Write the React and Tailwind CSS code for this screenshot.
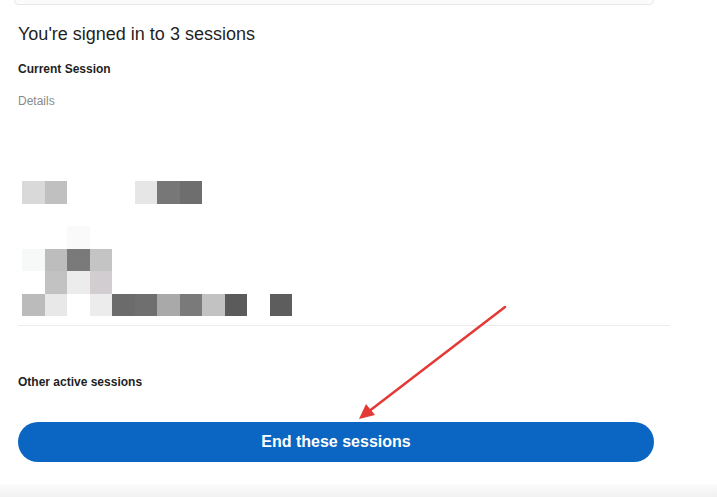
const cells = [
    ['bg-[#d9d9d9]', 'bg-[#c0c0c0]', '', '', '', 'bg-[#e6e6e6]', 'bg-[#777777]', 'bg-[#6e6e6e]', '', '', '', ''],
    ['', '', '', '', '', '', '', '', '', '', '', ''],
    ['', '', 'bg-[#fafafa]', '', '', '', '', '', '', '', '', ''],
    ['bg-[#f7f9f8]', 'bg-[#bdbdbd]', 'bg-[#7a7a7a]', 'bg-[#c4c4c4]', '', '', '', '', '', '', '', ''],
    ['', 'bg-[#c2c2c2]', 'bg-[#ececec]', 'bg-[#d1cdd1]', '', '', '', '', '', '', '', ''],
    ['bg-[#bbbbbb]', 'bg-[#e8e8e8]', '', 'bg-[#ececec]', 'bg-[#6b6b6b]', 'bg-[#6f6f6f]', 'bg-[#a9a9a9]', 'bg-[#7a7a7a]', 'bg-[#c2c2c2]', 'bg-[#5b5b5b]', '', 'bg-[#5d5d5d]'],
]

export default function App() {
    return (
        <div className="relative w-[717px] h-[497px] bg-white overflow-hidden font-['Liberation_Sans',sans-serif] text-[#1f1f1f]">
            <div className="ml-[14px] w-[640px] h-[5px] rounded-b-lg border-x border-b border-[#e6e6e6] bg-[#fbfbfb]" />

            <div className="pl-[18px]">
                <h2 className="mt-[17px] text-[18px] leading-6">You're signed in to 3 sessions</h2>
                <div className="mt-[15px] text-[12px] leading-4 font-bold">Current Session</div>
                <div className="mt-[16px] text-[12px] leading-4 text-[#8a8a8a]">Details</div>

                <div className="mt-[72px] ml-[4px] grid grid-cols-[repeat(12,22.5px)] auto-rows-[22.5px]">
                    {cells.flat().map((c, i) => (
                        <div key={i} className={c} />
                    ))}
                </div>

                <div className="mt-[9px] w-[652px] border-t border-[#ececec]" />

                <div className="mt-[48px] text-[12px] leading-4 font-bold">Other active sessions</div>

                <button className="mt-[32px] w-[636px] h-[40px] rounded-full bg-[#0a66c2] text-white text-[16px] font-bold">
                    End these sessions
                </button>
            </div>

            <div className="absolute left-0 right-0 bottom-0 h-[13px] bg-gradient-to-b from-[#fbfbfb] to-[#f1f1f1]" />

            <svg className="absolute left-0 top-0" width="717" height="497" viewBox="0 0 717 497">
                <line x1="505" y1="307" x2="368" y2="412" stroke="#e53935" strokeWidth="2.5" strokeLinecap="round" />
                <polygon points="359,419 366,404 375,415" fill="#e53935" />
            </svg>
        </div>
    )
}
